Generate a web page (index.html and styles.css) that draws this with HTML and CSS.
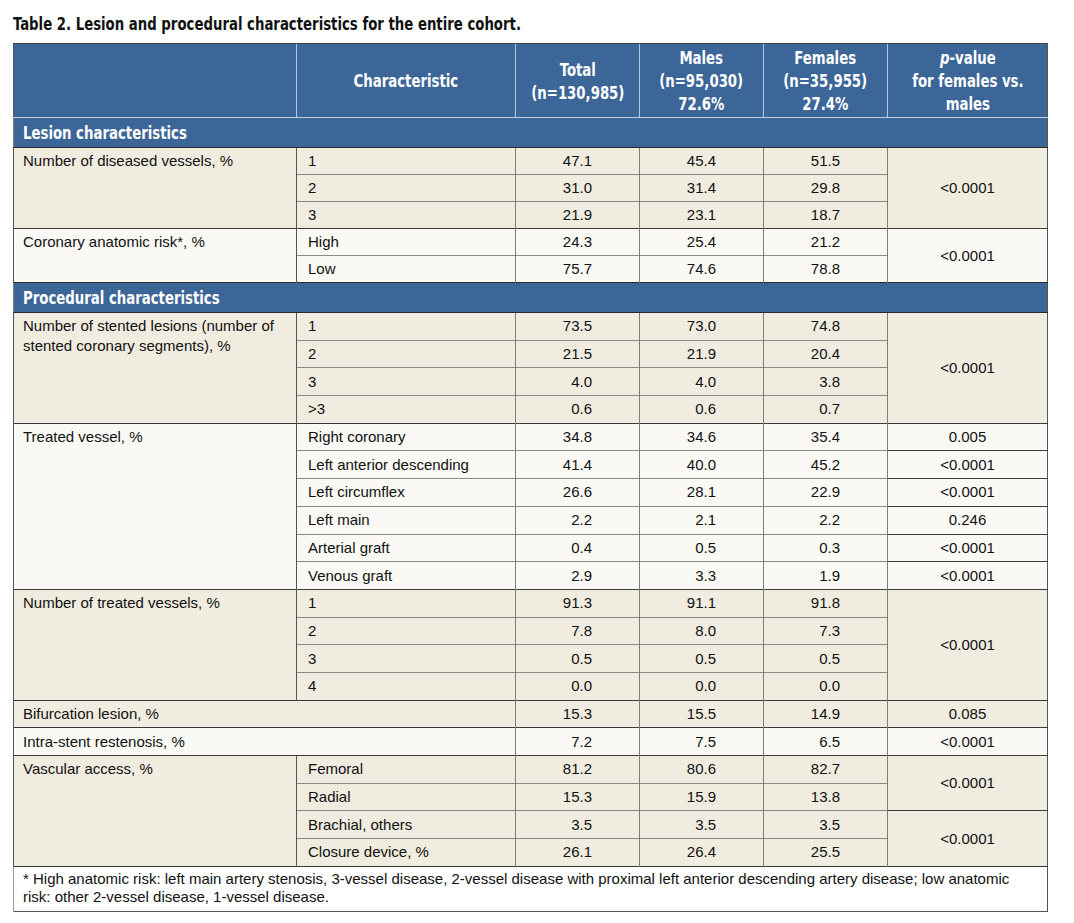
FILE: index.html
```html
<!DOCTYPE html>
<html>
<head>
<meta charset="utf-8">
<link rel="stylesheet" href="styles.css">
</head>
<body>
<div class="page">
  <h1 class="title"><span class="cond">Table 2. Lesion and procedural characteristics for the entire cohort.</span></h1>
  <table class="tbl">
    <colgroup>
      <col class="c1"><col class="c2"><col class="c3"><col class="c4"><col class="c5"><col class="c6">
    </colgroup>
    <thead>
      <tr class="head">
        <th></th>
        <th><span class="cond">Characteristic</span></th>
        <th><span class="cond">Total<br>(n=130,985)</span></th>
        <th><span class="cond">Males<br>(n=95,030)<br>72.6%</span></th>
        <th><span class="cond">Females<br>(n=35,955)<br>27.4%</span></th>
        <th><span class="cond"><i>p</i>-value<br>for females vs.<br>males</span></th>
      </tr>
    </thead>
    <tbody class="lesion">
      <tr class="band"><td colspan="6"><span class="cond">Lesion characteristics</span></td></tr>

      <tr class="beige gstart">
        <td class="lbl" rowspan="3">Number of diseased vessels, %</td>
        <td class="sub">1</td><td class="num">47.1</td><td class="num">45.4</td><td class="num">51.5</td>
        <td class="pv" rowspan="3">&lt;0.0001</td>
      </tr>
      <tr class="beige"><td class="sub">2</td><td class="num">31.0</td><td class="num">31.4</td><td class="num">29.8</td></tr>
      <tr class="beige"><td class="sub">3</td><td class="num">21.9</td><td class="num">23.1</td><td class="num">18.7</td></tr>

      <tr class="white gstart">
        <td class="lbl" rowspan="2">Coronary anatomic risk*, %</td>
        <td class="sub">High</td><td class="num">24.3</td><td class="num">25.4</td><td class="num">21.2</td>
        <td class="pv" rowspan="2">&lt;0.0001</td>
      </tr>
      <tr class="white"><td class="sub">Low</td><td class="num">75.7</td><td class="num">74.6</td><td class="num">78.8</td></tr>
    </tbody>
    <tbody class="proc">
      <tr class="band"><td colspan="6"><span class="cond">Procedural characteristics</span></td></tr>

      <tr class="beige gstart">
        <td class="lbl" rowspan="4">Number of stented lesions (number of stented coronary segments), %</td>
        <td class="sub">1</td><td class="num">73.5</td><td class="num">73.0</td><td class="num">74.8</td>
        <td class="pv" rowspan="4">&lt;0.0001</td>
      </tr>
      <tr class="beige"><td class="sub">2</td><td class="num">21.5</td><td class="num">21.9</td><td class="num">20.4</td></tr>
      <tr class="beige"><td class="sub">3</td><td class="num">4.0</td><td class="num">4.0</td><td class="num">3.8</td></tr>
      <tr class="beige"><td class="sub">&gt;3</td><td class="num">0.6</td><td class="num">0.6</td><td class="num">0.7</td></tr>

      <tr class="white gstart">
        <td class="lbl" rowspan="6">Treated vessel, %</td>
        <td class="sub">Right coronary</td><td class="num">34.8</td><td class="num">34.6</td><td class="num">35.4</td><td class="pv">0.005</td>
      </tr>
      <tr class="white"><td class="sub">Left anterior descending</td><td class="num">41.4</td><td class="num">40.0</td><td class="num">45.2</td><td class="pv">&lt;0.0001</td></tr>
      <tr class="white"><td class="sub">Left circumflex</td><td class="num">26.6</td><td class="num">28.1</td><td class="num">22.9</td><td class="pv">&lt;0.0001</td></tr>
      <tr class="white"><td class="sub">Left main</td><td class="num">2.2</td><td class="num">2.1</td><td class="num">2.2</td><td class="pv">0.246</td></tr>
      <tr class="white"><td class="sub">Arterial graft</td><td class="num">0.4</td><td class="num">0.5</td><td class="num">0.3</td><td class="pv">&lt;0.0001</td></tr>
      <tr class="white"><td class="sub">Venous graft</td><td class="num">2.9</td><td class="num">3.3</td><td class="num">1.9</td><td class="pv">&lt;0.0001</td></tr>

      <tr class="beige gstart">
        <td class="lbl" rowspan="4">Number of treated vessels, %</td>
        <td class="sub">1</td><td class="num">91.3</td><td class="num">91.1</td><td class="num">91.8</td>
        <td class="pv" rowspan="4">&lt;0.0001</td>
      </tr>
      <tr class="beige"><td class="sub">2</td><td class="num">7.8</td><td class="num">8.0</td><td class="num">7.3</td></tr>
      <tr class="beige"><td class="sub">3</td><td class="num">0.5</td><td class="num">0.5</td><td class="num">0.5</td></tr>
      <tr class="beige"><td class="sub">4</td><td class="num">0.0</td><td class="num">0.0</td><td class="num">0.0</td></tr>

      <tr class="beige gstart">
        <td class="lbl" colspan="2">Bifurcation lesion, %</td>
        <td class="num">15.3</td><td class="num">15.5</td><td class="num">14.9</td><td class="pv">0.085</td>
      </tr>
      <tr class="white gstart">
        <td class="lbl" colspan="2">Intra-stent restenosis, %</td>
        <td class="num">7.2</td><td class="num">7.5</td><td class="num">6.5</td><td class="pv">&lt;0.0001</td>
      </tr>

      <tr class="beige gstart">
        <td class="lbl" rowspan="4">Vascular access, %</td>
        <td class="sub">Femoral</td><td class="num">81.2</td><td class="num">80.6</td><td class="num">82.7</td>
        <td class="pv" rowspan="2">&lt;0.0001</td>
      </tr>
      <tr class="beige"><td class="sub">Radial</td><td class="num">15.3</td><td class="num">15.9</td><td class="num">13.8</td></tr>
      <tr class="beige"><td class="sub">Brachial, others</td><td class="num">3.5</td><td class="num">3.5</td><td class="num">3.5</td>
        <td class="pv pv-dark" rowspan="2">&lt;0.0001</td>
      </tr>
      <tr class="beige"><td class="sub">Closure device, %</td><td class="num">26.1</td><td class="num">26.4</td><td class="num">25.5</td></tr>
    </tbody>
    <tfoot>
      <tr class="foot">
        <td colspan="6">* High anatomic risk: left main artery stenosis, 3-vessel disease, 2-vessel disease with proximal left anterior descending artery disease; low anatomic risk: other 2-vessel disease, 1-vessel disease.</td>
      </tr>
    </tfoot>
  </table>
</div>
</body>
</html>
```

FILE: styles.css
```css
html, body {
  margin: 0;
  padding: 0;
  background: #ffffff;
}

.page {
  padding: 14px 0 0 13px;
}

.cond {
  display: inline-block;
  transform: scaleX(0.82);
  transform-origin: left center;
  white-space: nowrap;
}

.title {
  margin: 0 0 9px 0;
  font-family: "DejaVu Sans Condensed", "DejaVu Sans", sans-serif;
  font-stretch: condensed;
  font-weight: bold;
  font-size: 18px;
  line-height: 20px;
  color: #111111;
  white-space: nowrap;
}

.tbl {
  width: 1034px;
  border-collapse: collapse;
  table-layout: fixed;
  font-family: "Liberation Sans", Arial, sans-serif;
  font-size: 15px;
  color: #111111;
  border: 1px solid #555555;
}

.c1 { width: 283px; }
.c2 { width: 219px; }
.c3 { width: 124px; }
.c4 { width: 124px; }
.c5 { width: 124px; }
.c6 { width: 160px; }

.head th {
  height: 73px;
  padding: 0;
  background: #3c6698;
  color: #ffffff;
  font-family: "DejaVu Sans Condensed", "DejaVu Sans", sans-serif;
  font-stretch: condensed;
  font-weight: bold;
  font-size: 18px;
  line-height: 23px;
  text-align: center;
  vertical-align: middle;
  border-left: 1px solid #b9c9de;
  border-bottom: 1px solid #c3d1e3;
  border-top: 1px solid #444;
}

.head th .cond {
  transform-origin: center center;
}

.head th:first-child {
  border-left: 1px solid #555555;
}

tbody td {
  height: 26.7px;
  padding: 0;
  line-height: 20px;
  border-top: 1px solid #8a8a85;
  border-left: 1px solid #7d7d78;
}

.lesion td {
  height: 26px;
}

.band td,
.lesion .band td {
  height: 29px;
  padding: 0 9px;
  background: #3c6698;
  color: #ffffff;
  font-family: "DejaVu Sans Condensed", "DejaVu Sans", sans-serif;
  font-stretch: condensed;
  font-weight: bold;
  font-size: 18px;
  border-top: 1px solid #2a2a2a;
  border-bottom: 1px solid #2a2a2a;
}

.lesion .band td {
  border-top-color: #c3d1e3;
}

.beige td { background: #f0ece0; }
.white td { background: #faf9f5; }

.gstart td {
  border-top: 1px solid #3a3a3a;
}

.band + .gstart td {
  border-top: 1px solid #2a2a2a;
}

td.lbl {
  vertical-align: top;
  padding: 3px 9px 0 9px;
  border-left: 1px solid #555555;
}

td.lbl[colspan] {
  vertical-align: middle;
  padding-top: 0;
}

td.sub {
  padding-left: 11px;
  border-left: 1px solid #555555;
}

td.num {
  text-align: right;
  padding-right: 47px;
}

td.pv {
  text-align: center;
  border-top-color: #3a3a3a;
}

td.pv-dark {
  border-top: 1px solid #3a3a3a;
}

.foot td {
  background: #ffffff;
  padding: 3px 9px 5px 9px;
  font-size: 15px;
  line-height: 18px;
  border-top: 1px solid #3a3a3a;
  border-left: 1px solid #999999;
}
```
